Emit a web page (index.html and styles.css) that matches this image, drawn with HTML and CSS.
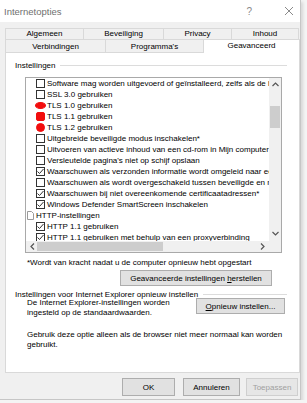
FILE: index.html
```html
<!DOCTYPE html>
<html lang="nl">
<head>
    <meta charset="UTF-8">
    <meta name="viewport" content="width=device-width, initial-scale=1.0">
    <title>Internetopties</title>
    <link rel="stylesheet" href="styles.css">
</head>
<body>
    <div class="window">
        <div class="titlebar">
            <span class="title">Internetopties</span>
            <span class="help">?</span>
            <svg class="close" width="10" height="10" viewBox="0 0 10 10"><path d="M1 1L9 9M9 1L1 9" stroke="#8a8a8a" stroke-width="1" fill="none"/></svg>
        </div>

        <div class="tabs">
            <div class="tab-row">
                <div class="tab t-alg">Algemeen</div>
                <div class="tab t-bev">Beveiliging</div>
                <div class="tab t-pri">Privacy</div>
                <div class="tab t-inh">Inhoud</div>
            </div>
            <div class="tab-row row-2">
                <div class="tab t-ver">Verbindingen</div>
                <div class="tab t-pro">Programma's</div>
                <div class="tab active">Geavanceerd</div>
            </div>
        </div>

        <div class="panel">
            <div class="group-head">
                <span>Instellingen</span>
                <div class="group-line"></div>
            </div>

            <div class="listbox">
                <div class="list-area">
                    <div class="list">
                        <div class="item"><span class="cb"></span>Software mag worden uitgevoerd of geïnstalleerd, zelfs als de handtekening ongeldig is</div>
                        <div class="item"><span class="cb"></span>SSL 3.0 gebruiken</div>
                        <div class="item"><span class="cb red red-blob"></span>TLS 1.0 gebruiken</div>
                        <div class="item"><span class="cb red red-box"></span>TLS 1.1 gebruiken</div>
                        <div class="item"><span class="cb red red-dot"></span>TLS 1.2 gebruiken</div>
                        <div class="item"><span class="cb"></span>Uitgebreide beveiligde modus inschakelen*</div>
                        <div class="item"><span class="cb"></span>Uitvoeren van actieve inhoud van een cd-rom in Mijn computer toestaan*</div>
                        <div class="item"><span class="cb"></span>Versleutelde pagina's niet op schijf opslaan</div>
                        <div class="item"><span class="cb"><svg width="7" height="7" viewBox="0 0 7 7"><path d="M0.5 3.5L2.5 5.5L6.5 1" stroke="#333" stroke-width="1" fill="none"/></svg></span>Waarschuwen als verzonden informatie wordt omgeleid naar een zone waarin dit niet is toegestaan</div>
                        <div class="item"><span class="cb"></span>Waarschuwen als wordt overgeschakeld tussen beveiligde en niet-beveiligde modus</div>
                        <div class="item"><span class="cb"><svg width="7" height="7" viewBox="0 0 7 7"><path d="M0.5 3.5L2.5 5.5L6.5 1" stroke="#333" stroke-width="1" fill="none"/></svg></span>Waarschuwen bij niet overeenkomende certificaatadressen*</div>
                        <div class="item"><span class="cb"><svg width="7" height="7" viewBox="0 0 7 7"><path d="M0.5 3.5L2.5 5.5L6.5 1" stroke="#333" stroke-width="1" fill="none"/></svg></span>Windows Defender SmartScreen inschakelen</div>
                        <div class="item group"><svg class="doc" width="7" height="9" viewBox="0 0 7 9"><path d="M0.5 0.5H4.5L6.5 2.5V8.5H0.5Z" stroke="#9a9a9a" stroke-width="1" fill="#fff"/></svg>HTTP-instellingen</div>
                        <div class="item"><span class="cb"><svg width="7" height="7" viewBox="0 0 7 7"><path d="M0.5 3.5L2.5 5.5L6.5 1" stroke="#333" stroke-width="1" fill="none"/></svg></span>HTTP 1.1 gebruiken</div>
                        <div class="item"><span class="cb"><svg width="7" height="7" viewBox="0 0 7 7"><path d="M0.5 3.5L2.5 5.5L6.5 1" stroke="#333" stroke-width="1" fill="none"/></svg></span>HTTP 1.1 gebruiken met behulp van een proxyverbinding</div>
                    </div>
                    <div class="vscroll">
                        <svg class="arrow" width="7" height="5" viewBox="0 0 7 5"><path d="M0.5 4L3.5 1L6.5 4" stroke="#555" stroke-width="1.2" fill="none"/></svg>
                        <div class="vthumb"></div>
                        <svg class="arrow down" width="7" height="5" viewBox="0 0 7 5"><path d="M0.5 1L3.5 4L6.5 1" stroke="#555" stroke-width="1.2" fill="none"/></svg>
                    </div>
                </div>
                <div class="hscroll-row">
                    <div class="hscroll">
                        <svg class="arrow" width="5" height="7" viewBox="0 0 5 7"><path d="M4 0.5L1 3.5L4 6.5" stroke="#555" stroke-width="1.2" fill="none"/></svg>
                        <div class="hthumb"></div>
                        <svg class="arrow right" width="5" height="7" viewBox="0 0 5 7"><path d="M1 0.5L4 3.5L1 6.5" stroke="#555" stroke-width="1.2" fill="none"/></svg>
                    </div>
                    <div class="corner"></div>
                </div>
            </div>

            <p class="note">*Wordt van kracht nadat u de computer opnieuw hebt opgestart</p>
            <button class="btn btn-herstel">Geavanceerde instellingen <u>h</u>erstellen</button>

            <div class="group-head group-2">
                <span>Instellingen voor Internet Explorer opnieuw instellen</span>
                <div class="group-line"></div>
            </div>
            <div class="reset-row">
                <p class="reset-text">De Internet Explorer-instellingen worden<br>ingesteld op de standaardwaarden.</p>
                <button class="btn btn-reset"><u>O</u>pnieuw instellen...</button>
            </div>
            <p class="hint">Gebruik deze optie alleen als de browser niet meer normaal kan worden<br>gebruikt.</p>
        </div>

        <div class="footer">
            <button class="btn btn-ok">OK</button>
            <button class="btn btn-cancel">Annuleren</button>
            <button class="btn btn-apply" disabled>Toepassen</button>
        </div>
    </div>
</body>
</html>
```

FILE: styles.css
```css
body {
    margin: 0;
    background: #f4f4f4;
    font-family: "Liberation Sans", Arial, sans-serif;
    font-size: 8px;
    color: #000;
}
.window {
    width: 300px;
    height: 399px;
    background: #f0f0f0;
    border-right: 1px solid #c6c6c6;
    border-bottom: 1px solid #c6c6c6;
    box-shadow: 2px 2px 3px rgba(0, 0, 0, 0.12);
}
.titlebar {
    height: 22px;
    background: #fff;
    display: flex;
    align-items: center;
}
.title {
    font-size: 9.5px;
    color: #6f6f6f;
    margin-left: 4px;
    flex: 1;
}
.help {
    font-size: 10px;
    color: #8a8a8a;
    margin-right: 32px;
}
.close {
    margin-right: 6px;
}

/* tabs */
.tabs {
    margin: 6px 0 0 5px;
    width: 295px;
}
.tab-row {
    display: flex;
    align-items: flex-end;
}
.tab {
    box-sizing: border-box;
    height: 11px;
    line-height: 10px;
    text-align: center;
    background: #f0f0f0;
    border: 1px solid #d9d9d9;
    border-bottom: none;
    margin-left: -1px;
}
.tab:first-child {
    margin-left: 0;
}
.t-alg { width: 79px; }
.t-bev { width: 81px; }
.t-pri { width: 69px; }
.t-inh { width: 68px; }
.row-2 .tab {
    height: 13px;
    line-height: 14px;
}
.t-ver { width: 101px; }
.t-pro { width: 99px; }
.row-2 .tab.active {
    width: 97px;
    height: 14px;
    line-height: 11px;
    background: #fff;
    margin-bottom: -1px;
    position: relative;
    z-index: 1;
}

/* panel */
.panel {
    box-sizing: border-box;
    margin-left: 5px;
    width: 295px;
    height: 321px;
    background: #fff;
    border: 1px solid #d9d9d9;
}
.group-head {
    display: flex;
    align-items: center;
    height: 10px;
    margin-top: 7px;
    padding-left: 9px;
}
.group-line {
    flex: 1;
    height: 1px;
    background: #dcdcdc;
    margin: 0 12px 0 5px;
}
.group-2 {
    height: 8px;
    margin-top: 4px;
}

.listbox {
    box-sizing: border-box;
    width: 257px;
    height: 176px;
    margin: 7px 0 0 19px;
    border: 1px solid #a9a9a9;
}
.list-area {
    display: flex;
    height: 163px;
}
.list {
    flex: 1;
    overflow: hidden;
}
.item {
    height: 11px;
    line-height: 11px;
    white-space: nowrap;
    display: flex;
    align-items: center;
    padding-left: 10px;
}
.item.group {
    padding-left: 1px;
}
.doc {
    margin-right: 2px;
}
.cb {
    box-sizing: border-box;
    width: 9px;
    height: 9px;
    border: 1px solid #333;
    background: #fff;
    margin-right: 2px;
    flex-shrink: 0;
    display: flex;
    align-items: center;
    justify-content: center;
}
.cb.red {
    background: #f20d0d;
    border-color: #f20d0d;
}
.cb.red-blob {
    width: 11px;
    height: 7px;
    border-radius: 50%;
    margin-left: -1px;
    margin-right: 1px;
}
.cb.red-box {
    border-radius: 2px;
}
.cb.red-dot {
    border-radius: 50%;
}

.vscroll {
    width: 12px;
    background: #f0f0f0;
    display: flex;
    flex-direction: column;
    align-items: center;
}
.vscroll .arrow {
    margin-top: 4px;
}
.vthumb {
    width: 10px;
    height: 22px;
    margin-top: 19px;
    background: #cdcdcd;
}
.vscroll .arrow.down {
    margin-top: auto;
    margin-bottom: 5px;
}
.hscroll-row {
    display: flex;
    height: 11px;
}
.hscroll {
    flex: 1;
    background: #f0f0f0;
    display: flex;
    align-items: center;
}
.hscroll .arrow {
    margin-left: 4px;
}
.hthumb {
    width: 126px;
    height: 9px;
    margin-left: 2px;
    background: #cdcdcd;
}
.hscroll .arrow.right {
    margin-left: auto;
    margin-right: 4px;
}
.corner {
    width: 12px;
    background: #f0f0f0;
}

.note {
    margin: 4px 0 0 21px;
    line-height: 11px;
}
.btn {
    box-sizing: border-box;
    font-family: "Liberation Sans", Arial, sans-serif;
    font-size: 8px;
    color: #000;
    background: #e1e1e1;
    border: 1px solid #adadad;
    padding: 0;
}
.btn-herstel {
    display: block;
    width: 152px;
    height: 16px;
    margin: 2px 0 0 114px;
}
.reset-row {
    display: flex;
    align-items: flex-start;
}
.reset-text {
    margin: 0 0 0 21px;
    line-height: 10px;
    flex: 1;
}
.btn-reset {
    width: 89px;
    height: 16px;
    margin-right: 14px;
}
.hint {
    margin: 12px 0 0 21px;
    line-height: 10px;
}

.footer {
    display: flex;
    justify-content: flex-end;
    padding: 5px 2px 0 0;
}
.footer .btn {
    height: 18px;
}
.btn-ok {
    width: 53px;
}
.btn-cancel {
    width: 57px;
    margin-left: 8px;
}
.btn-apply {
    width: 52px;
    margin-left: 6px;
    color: #a0a0a0;
    background: #e6e6e6;
    border-color: #cfcfcf;
}
```
